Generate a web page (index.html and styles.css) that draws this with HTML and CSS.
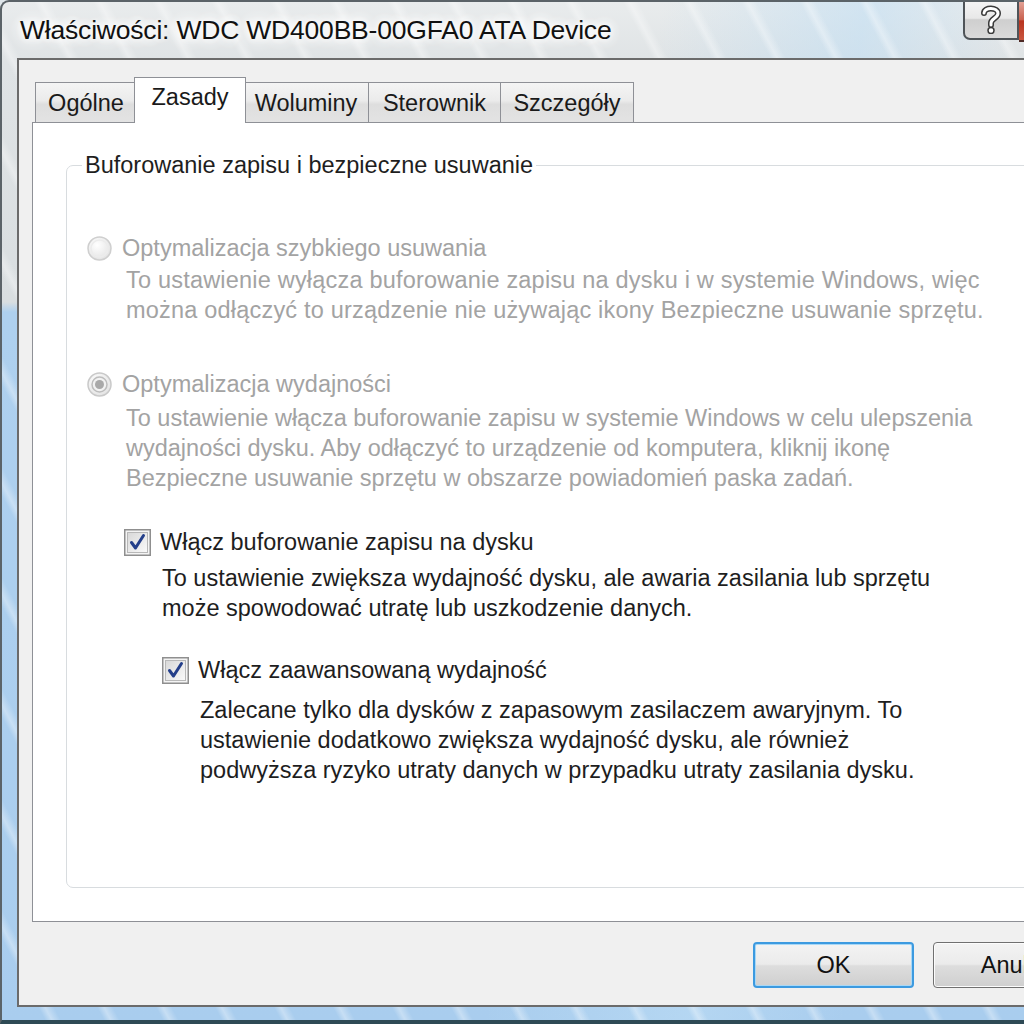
FILE: index.html
```html
<!DOCTYPE html>
<html lang="pl">
<head>
<meta charset="utf-8">
<title>Właściwości: WDC WD400BB-00GFA0 ATA Device</title>
<link rel="stylesheet" href="styles.css">
</head>
<body>
<div class="window">
  <div class="titlebar">
    <span class="title">Właściwości: WDC WD400BB-00GFA0 ATA Device</span>
    <div class="caption-btns">
      <div class="cap-help">
        <svg width="26" height="30" viewBox="0 0 26 30">
          <path d="M6 9 C6 3 20 3 20 9.5 C20 14 13 14.5 13 19 L13 21" fill="none" stroke="#3a3a3a" stroke-width="6" stroke-linecap="round"/>
          <path d="M6 9 C6 3 20 3 20 9.5 C20 14 13 14.5 13 19 L13 21" fill="none" stroke="#ffffff" stroke-width="3" stroke-linecap="round"/>
          <circle cx="13" cy="26.5" r="3" fill="#ffffff" stroke="#3a3a3a" stroke-width="1.5"/>
        </svg>
      </div>
      <div class="cap-close"></div>
    </div>
  </div>
  <div class="client">
    <div class="tabs">
      <div class="tab t1">Ogólne</div>
      <div class="tab t2 selected">Zasady</div>
      <div class="tab t3">Woluminy</div>
      <div class="tab t4">Sterownik</div>
      <div class="tab t5">Szczegóły</div>
    </div>
    <div class="panel">
      <fieldset class="group">
        <legend>Buforowanie zapisu i bezpieczne usuwanie</legend>

        <div class="opt disabled first">
          <svg class="radio" width="25" height="25" viewBox="0 0 25 25">
            <defs>
              <radialGradient id="rg1" cx="40%" cy="35%" r="70%">
                <stop offset="0" stop-color="#ffffff"/>
                <stop offset="1" stop-color="#e2e2e2"/>
              </radialGradient>
            </defs>
            <circle cx="12.5" cy="12.5" r="11.5" fill="url(#rg1)" stroke="#cfcfcf" stroke-width="1.5"/>
            <circle cx="12.5" cy="12.5" r="8.5" fill="none" stroke="#ececec" stroke-width="1.5"/>
          </svg>
          <span>Optymalizacja szybkiego usuwania</span>
        </div>
        <div class="desc disabled d1">To ustawienie wyłącza buforowanie zapisu na dysku i w systemie Windows, więc<br>można odłączyć to urządzenie nie używając ikony Bezpieczne usuwanie sprzętu.</div>

        <div class="opt disabled second">
          <svg class="radio" width="25" height="25" viewBox="0 0 25 25">
            <circle cx="12.5" cy="12.5" r="11.5" fill="url(#rg1)" stroke="#c9c9c9" stroke-width="1.5"/>
            <circle cx="12.5" cy="12.5" r="7.5" fill="#f2f2f2" stroke="#bdbdbd" stroke-width="1.5"/>
            <circle cx="12.5" cy="12.5" r="4.5" fill="#a9a9a9"/>
          </svg>
          <span>Optymalizacja wydajności</span>
        </div>
        <div class="desc disabled d2">To ustawienie włącza buforowanie zapisu w systemie Windows w celu ulepszenia<br>wydajności dysku. Aby odłączyć to urządzenie od komputera, kliknij ikonę<br>Bezpieczne usuwanie sprzętu w obszarze powiadomień paska zadań.</div>

        <div class="check-group cg1">
          <div class="opt">
            <svg class="check" width="27" height="27" viewBox="0 0 27 27">
              <defs>
                <linearGradient id="cbg" x1="0" y1="0" x2="1" y2="1">
                  <stop offset="0" stop-color="#d8d8d8"/>
                  <stop offset="1" stop-color="#fafafa"/>
                </linearGradient>
              </defs>
              <rect x="0.75" y="0.75" width="25.5" height="25.5" fill="#f4f4f4" stroke="#8f8f8f" stroke-width="1.5"/>
              <rect x="3.5" y="3.5" width="20" height="20" fill="url(#cbg)" stroke="#b8b8b8" stroke-width="1"/>
              <path d="M7.5 13.5 L11.5 19 L19.5 6.5" fill="none" stroke="#243f8a" stroke-width="3" stroke-linejoin="round" stroke-linecap="round"/>
            </svg>
            <span>Włącz buforowanie zapisu na dysku</span>
          </div>
          <div class="desc d3">To ustawienie zwiększa wydajność dysku, ale awaria zasilania lub sprzętu<br>może spowodować utratę lub uszkodzenie danych.</div>

          <div class="check-group cg2">
            <div class="opt">
              <svg class="check" width="27" height="27" viewBox="0 0 27 27">
                <rect x="0.75" y="0.75" width="25.5" height="25.5" fill="#f4f4f4" stroke="#8f8f8f" stroke-width="1.5"/>
                <rect x="3.5" y="3.5" width="20" height="20" fill="url(#cbg)" stroke="#b8b8b8" stroke-width="1"/>
                <path d="M7.5 13.5 L11.5 19 L19.5 6.5" fill="none" stroke="#243f8a" stroke-width="3" stroke-linejoin="round" stroke-linecap="round"/>
              </svg>
              <span>Włącz zaawansowaną wydajność</span>
            </div>
            <div class="desc d4">Zalecane tylko dla dysków z zapasowym zasilaczem awaryjnym. To<br>ustawienie dodatkowo zwiększa wydajność dysku, ale również<br>podwyższa ryzyko utraty danych w przypadku utraty zasilania dysku.</div>
          </div>
        </div>
      </fieldset>
    </div>
    <div class="buttons">
      <div class="btn default">OK</div>
      <div class="btn">Anuluj</div>
    </div>
  </div>
</div>
</body>
</html>
```

FILE: styles.css
```css
html, body {
  margin: 0;
  padding: 0;
  width: 1024px;
  height: 1024px;
  overflow: hidden;
  background: #dfe6ea;
  font-family: "Liberation Sans", Arial, sans-serif;
}

.window {
  position: relative;
  box-sizing: border-box;
  width: 1024px;
  height: 1024px;
  border-top: 2px solid #5b6368;
  border-left: 2px solid #5b6368;
  border-bottom: 4px solid #2e4a55;
  border-radius: 9px 0 0 0;
  overflow: hidden;
  display: flex;
  flex-direction: column;
  background:
    repeating-linear-gradient(62deg, rgba(255,255,255,0) 0px, rgba(255,255,255,0) 38px, rgba(255,255,255,0.35) 44px, rgba(255,255,255,0) 52px),
    linear-gradient(100deg, rgba(255,255,255,0) 55%, rgba(190,222,245,0.55) 72%, rgba(255,255,255,0) 85%),
    linear-gradient(180deg, #e9eced 0px, #dfe3e5 60px, #d9dee0 300px, #aed0ee 310px, #a9cdee 1024px);
}

.titlebar {
  height: 56px;
  flex: none;
  display: flex;
  align-items: center;
  padding-left: 18px;
}

.title {
  font-size: 26.5px;
  color: #111;
  letter-spacing: -0.2px;
  padding-top: 1px;
  text-shadow: 0 0 6px #fff, 0 0 10px #fff, 0 0 14px #fff, 0 0 18px #fff, 0 0 22px #fff;
}

.caption-btns {
  position: absolute;
  top: -2px;
  left: 961px;
  display: flex;
}

.cap-help {
  box-sizing: border-box;
  width: 56px;
  height: 40px;
  border: 2px solid #4f5458;
  border-top: none;
  border-radius: 0 0 0 7px;
  background: linear-gradient(180deg, #f6f6f6 0%, #e8e8e8 48%, #cfcfcf 52%, #dadada 100%);
  display: flex;
  align-items: center;
  justify-content: center;
}

.cap-close {
  width: 60px;
  height: 40px;
  background: linear-gradient(180deg, #e5a89c 0%, #c8604e 50%, #b8341f 52%, #c9553e 100%);
  border-bottom: 2px solid #4f2a25;
}

.client {
  flex: 1;
  margin-left: 15px;
  margin-bottom: 13px;
  width: 1200px;
  background: #f0f0f0;
  border-top: 2px solid #6b6b6b;
  border-left: 2px solid #6b6b6b;
  border-bottom: 2px solid #6b6b6b;
  padding: 22px 0 0 13px;
  box-sizing: border-box;
}

.tabs {
  display: flex;
  align-items: flex-end;
  height: 40px;
  padding-left: 3px;
  position: relative;
  z-index: 2;
}

.tab {
  box-sizing: border-box;
  height: 40px;
  border: 1px solid #8e9096;
  border-bottom: none;
  background: linear-gradient(180deg, #f4f4f4 0%, #ebebeb 45%, #dedede 55%, #e3e3e3 100%);
  font-size: 23.5px;
  color: #1a1a1a;
  display: flex;
  align-items: center;
  justify-content: center;
  padding-top: 2px;
  margin-right: -1px;
}

.t1 { width: 102px; }
.t2 { width: 108px; }
.t3 { width: 126px; }
.t4 { width: 133px; }
.t5 { width: 134px; }

.tab.selected {
  width: 112px;
  height: 46px;
  margin: 0 -3px -1px -2px;
  background: #ffffff;
  position: relative;
  z-index: 3;
  padding-top: 0;
  padding-bottom: 6px;
}

.panel {
  box-sizing: border-box;
  width: 1100px;
  height: 800px;
  background: #ffffff;
  border: 1px solid #8e9096;
  padding: 27px 0 33px 33px;
  position: relative;
  z-index: 1;
}

.group {
  box-sizing: border-box;
  margin: 0;
  height: 100%;
  width: 1040px;
  border: 1px solid #d8dcdf;
  border-radius: 7px;
  padding: 53px 0 0 20px;
  font-size: 23.5px;
  color: #1e1e1e;
}

.group legend {
  margin-left: -5px;
  padding: 0 3px;
  line-height: 30px;
  color: #1e1e1e;
}

.opt {
  display: flex;
  align-items: center;
  height: 30px;
  gap: 10px;
}

.opt svg { flex: none; }

.disabled { color: #a3a3a3; }

.desc {
  line-height: 30px;
  white-space: nowrap;
}

.d1 { margin: 2px 0 0 39px; letter-spacing: 0.2px; }
.second { margin-top: 44px; }
.d2 { margin: 4px 0 0 39px; }

.check-group .opt { gap: 9px; }

.cg1 { margin: 34px 0 0 37px; }
.d3 { margin: 6px 0 0 38px; }
.cg2 { margin: 32px 0 0 38px; }
.d4 { margin: 10px 0 0 38px; }

.buttons {
  display: flex;
  gap: 19px;
  margin-top: 20px;
  padding-left: 721px;
}

.btn {
  box-sizing: border-box;
  width: 161px;
  height: 46px;
  border: 1px solid #707070;
  border-radius: 4px;
  background: linear-gradient(180deg, #f3f3f3 0%, #ebebeb 48%, #dddddd 52%, #cfcfcf 100%);
  box-shadow: inset 0 0 0 1px #fcfcfc;
  font-size: 23.5px;
  color: #111;
  display: flex;
  align-items: center;
  justify-content: center;
}

.btn.default {
  border: 2px solid #3c9ae0;
  box-shadow: inset 0 0 0 1px #a8d8f6;
}
```
